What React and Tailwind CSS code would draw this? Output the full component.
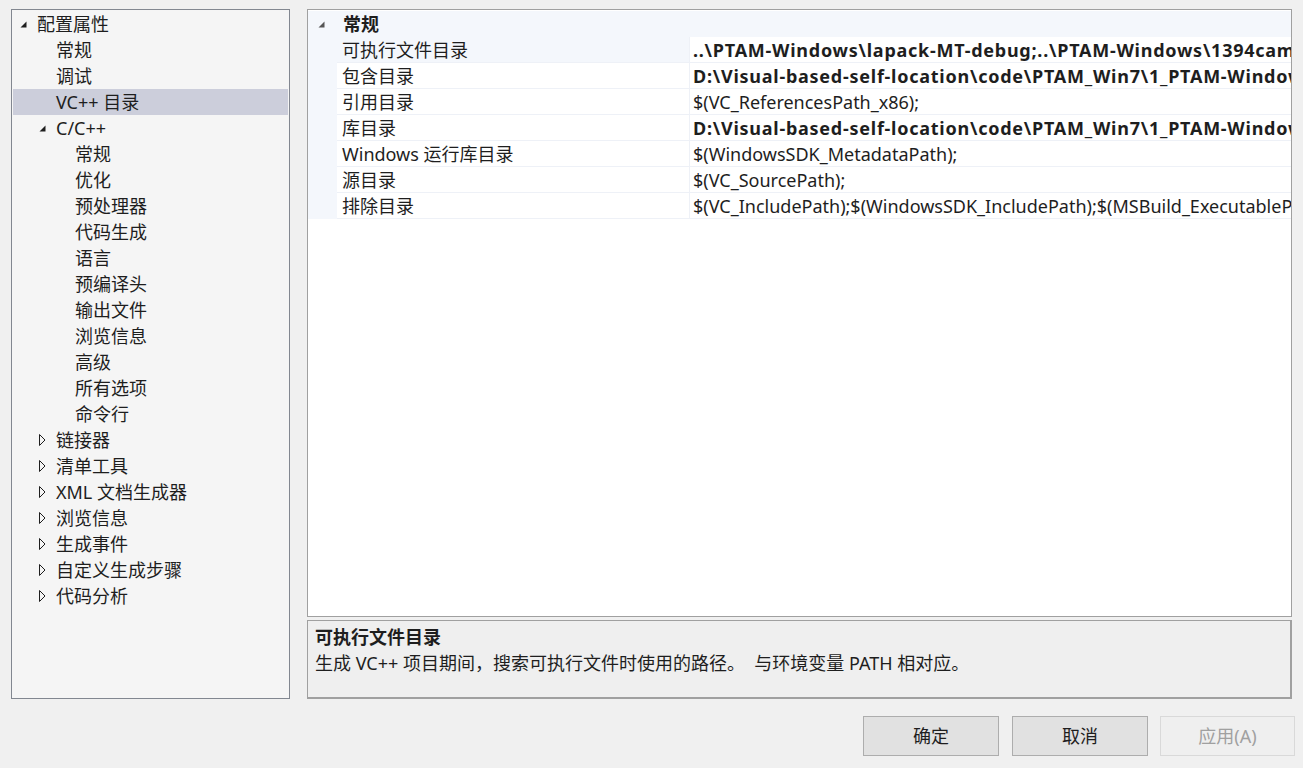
import React from 'react';

const FONT = "font-['Noto_Sans','Noto_Sans_CJK_SC',sans-serif]";

const treeItems = [
  { label: '配置属性', level: 0, icon: 'open' },
  { label: '常规', level: 1 },
  { label: '调试', level: 1 },
  { label: 'VC++ 目录', level: 1, selected: true },
  { label: 'C/C++', level: 1, icon: 'open' },
  { label: '常规', level: 2 },
  { label: '优化', level: 2 },
  { label: '预处理器', level: 2 },
  { label: '代码生成', level: 2 },
  { label: '语言', level: 2 },
  { label: '预编译头', level: 2 },
  { label: '输出文件', level: 2 },
  { label: '浏览信息', level: 2 },
  { label: '高级', level: 2 },
  { label: '所有选项', level: 2 },
  { label: '命令行', level: 2 },
  { label: '链接器', level: 1, icon: 'closed' },
  { label: '清单工具', level: 1, icon: 'closed' },
  { label: 'XML 文档生成器', level: 1, icon: 'closed' },
  { label: '浏览信息', level: 1, icon: 'closed' },
  { label: '生成事件', level: 1, icon: 'closed' },
  { label: '自定义生成步骤', level: 1, icon: 'closed' },
  { label: '代码分析', level: 1, icon: 'closed' },
];

const props = [
  { name: '可执行文件目录', value: '..\\PTAM-Windows\\lapack-MT-debug;..\\PTAM-Windows\\1394camera646\\lib;$(VC_ExecutablePath_x86);$(WindowsSDK_ExecutablePath);', bold: true, active: true },
  { name: '包含目录', value: 'D:\\Visual-based-self-location\\code\\PTAM_Win7\\1_PTAM-Windows\\include;$(VC_IncludePath);', bold: true },
  { name: '引用目录', value: '$(VC_ReferencesPath_x86);' },
  { name: '库目录', value: 'D:\\Visual-based-self-location\\code\\PTAM_Win7\\1_PTAM-Windows\\lib;$(VC_LibraryPath_x86);', bold: true },
  { name: 'Windows 运行库目录', value: '$(WindowsSDK_MetadataPath);' },
  { name: '源目录', value: '$(VC_SourcePath);' },
  { name: '排除目录', value: '$(VC_IncludePath);$(WindowsSDK_IncludePath);$(MSBuild_ExecutablePath);$(VC_LibraryPath_x86);' },
];

const OpenArrow = ({ color = '#1e1e1e' }) => (
  <svg width="7" height="7" viewBox="0 0 7 7">
    <path d="M6.5 0.5 L6.5 6.5 L0.5 6.5 Z" fill={color} />
  </svg>
);

const ClosedArrow = () => (
  <svg width="7" height="12" viewBox="0 0 7 12">
    <path d="M0.5 0.5 L6 6 L0.5 11.5 Z" fill="none" stroke="#1e1e1e" strokeWidth="1" />
  </svg>
);

const TreeRow = ({ item }) => {
  const pad = item.level === 0 ? 'pl-[7px]' : item.level === 1 ? 'pl-[26px]' : 'pl-[57px]';
  return (
    <div className={`flex items-center h-[26px] ${pad} ${item.selected ? 'bg-[#cccedb]' : ''}`}>
      {item.icon ? (
        <span className="w-[12px] flex items-center justify-start">
          {item.icon === 'open' ? <OpenArrow /> : <ClosedArrow />}
        </span>
      ) : (
        item.level === 1 && <span className="w-[12px]" />
      )}
      <span className="ml-[5px] whitespace-nowrap">{item.label}</span>
    </div>
  );
};

export default function App() {
  return (
    <div className={`w-[1303px] h-[768px] bg-[#f0f0f0] text-[#1e1e1e] text-[18px] leading-[26px] ${FONT} overflow-hidden`}>
      <div className="flex pl-[11px] pt-[9px] gap-[17px]">
        {/* tree */}
        <div className="w-[279px] h-[690px] border border-[#828790] bg-[#f5f5f5] p-px">
          {treeItems.map((item, i) => (
            <TreeRow key={i} item={item} />
          ))}
        </div>

        {/* right column */}
        <div className="w-[985px] flex flex-col gap-[3px]">
          <div className="h-[608px] border border-[#a0a0a0] bg-white overflow-hidden">
            <div className="flex h-[26px] items-center bg-[#f4f7fc] mt-px">
              <span className="w-[35px] flex justify-start pl-[10px]">
                <OpenArrow color="#555" />
              </span>
              <span className="font-bold">常规</span>
            </div>
            {props.map((p, i) => (
              <div key={i} className="flex h-[26px] bg-[#f4f7fc]">
                <div className={`ml-[29px] w-[352px] pl-[5px] border-b border-[#eef1f7] whitespace-nowrap ${p.active ? 'bg-[#f4f7fc]' : 'bg-white'}`}>
                  {p.name}
                </div>
                <div className={`flex-1 pl-[3px] bg-white border-l border-b border-[#eef1f7] whitespace-nowrap overflow-hidden ${p.bold ? 'font-bold tracking-[0.75px]' : ''}`}>
                  {p.value}
                </div>
              </div>
            ))}
          </div>
          <div className="h-[79px] border border-[#a0a0a0] border-r-2 border-b-2 bg-[#efefef] px-[7px] pt-[3px]">
            <div className="font-bold">可执行文件目录</div>
            <div className="whitespace-pre">生成 VC++ 项目期间，搜索可执行文件时使用的路径。  与环境变量 PATH 相对应。</div>
          </div>
        </div>
      </div>

      {/* buttons */}
      <div className="flex justify-end pr-[8px] pt-[17px] gap-[13px]">
        <button className="w-[136px] h-[40px] border border-[#adadad] bg-[#e1e1e1] text-[#1e1e1e]">确定</button>
        <button className="w-[136px] h-[40px] border border-[#adadad] bg-[#e1e1e1] text-[#1e1e1e] mr-[-1px]">取消</button>
        <button className="w-[135px] h-[40px] border border-[#d9d9d9] bg-[#efefef] text-[#a0a0a0]">应用(A)</button>
      </div>
    </div>
  );
}
